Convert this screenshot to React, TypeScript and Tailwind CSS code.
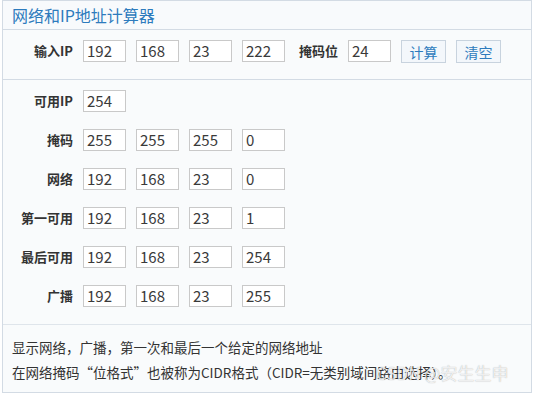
const font = { fontFamily: '"Microsoft YaHei", "Noto Sans CJK SC", "Noto Sans", sans-serif' };

const Field = ({ value, w = "w-[43px]" }: { value: string; w?: string }) => (
  <div className={`${w} h-[22px] border border-[#c9c9c9] bg-white pl-[3px] text-[15px] leading-[20px] text-[#3a3a3a]`}>
    {value}
  </div>
);

const Row = ({ label, values }: { label: string; values: string[] }) => (
  <div className="flex items-center h-[22px]">
    <div className="w-[70px] text-right text-[13px] font-bold text-[#333] mr-[10px]">{label}</div>
    <div className="flex gap-[10px]">
      {values.map((v, i) => (
        <Field key={i} value={v} />
      ))}
    </div>
  </div>
);

export default function App() {
  return (
    <div className="w-[533px] h-[394px] bg-white relative" style={font}>
      <div className="ml-[2px] w-[530px] h-[393px] border border-[#d3dbe4] bg-[#f9fbfc] flex flex-col">
        <div className="h-[29px] border-b border-[#d3dbe4] bg-[#f8fafc] pl-[9px] flex items-center text-[16px] text-[#2d7bbd]">
          网络和IP地址计算器
        </div>
        <div className="h-[50px] border-b border-[#d3dbe4] pt-[10px] flex items-start">
          <Row label="输入IP" values={["192", "168", "23", "222"]} />
          <div className="ml-[14px] h-[22px] flex items-center text-[13px] font-bold text-[#333]">掩码位</div>
          <div className="ml-[10px]">
            <Field value="24" />
          </div>
          <button className="ml-[10px] w-[45px] h-[23px] border border-[#c8d3de] bg-[#f3f7fb] text-[14px] text-[#2d7bbd] leading-[20px]">
            计算
          </button>
          <button className="ml-[10px] w-[45px] h-[23px] border border-[#c8d3de] bg-[#f3f7fb] text-[14px] text-[#2d7bbd] leading-[20px]">
            清空
          </button>
        </div>
        <div className="h-[245px] border-b border-[#dfe5eb] pt-[10px] flex flex-col gap-[17px]">
          <Row label="可用IP" values={["254"]} />
          <Row label="掩码" values={["255", "255", "255", "0"]} />
          <Row label="网络" values={["192", "168", "23", "0"]} />
          <Row label="第一可用" values={["192", "168", "23", "1"]} />
          <Row label="最后可用" values={["192", "168", "23", "254"]} />
          <Row label="广播" values={["192", "168", "23", "255"]} />
        </div>
        <div className="flex-1 pl-[9px] pt-[10px] text-[13.5px] leading-[25px] text-[#333]">
          <div>显示网络，广播，第一次和最后一个给定的网络地址</div>
          <div>在网络掩码“位格式”也被称为CIDR格式（CIDR=无类别域间路由选择）。</div>
        </div>
      </div>
      <div className="absolute left-[376px] top-[360px] text-[17px] text-white/80 whitespace-nowrap" style={{ textShadow: "0 0 1px rgba(0,0,0,0.35)" }}>
        CSDN @安生生申
      </div>
    </div>
  );
}
